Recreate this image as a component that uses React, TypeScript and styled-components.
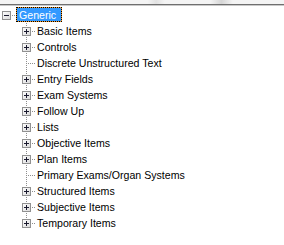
import React, { FC } from 'react';
import styled, { createGlobalStyle } from 'styled-components';

const Global = createGlobalStyle`
	html, body {
		margin: 0;
		padding: 0;
		background: #ffffff;
	}
	body {
		font-family: "Liberation Sans", Arial, sans-serif;
		font-size: 10.6px;
		color: #000000;
	}
`;

const Wrapper = styled.div`
	width: 284px;
	height: 245px;
	display: flex;
	flex-direction: column;
	overflow: hidden;
	background: #ffffff;
`;

const TopBar = styled.div`
	flex: 0 0 4px;
	background: linear-gradient(
		to right,
		#f4f4f4 0%,
		#f4f4f4 52%,
		#e2e2e2 55%,
		#f4f4f4 58%,
		#f4f4f4 74%,
		#d6d6d6 78%,
		#f4f4f4 82%,
		#f4f4f4 100%
	);
	border-bottom: 1px solid #6f6f6f;
	box-shadow: 0 1px 0 #c9c9c9;
`;

const Tree = styled.div`
	display: flex;
	flex-direction: column;
	padding-top: 2px;
`;

const Row = styled.div<{ $indent: number }>`
	display: flex;
	align-items: stretch;
	height: 16px;
	padding-left: ${(p) => p.$indent}px;
`;

const Connector = styled.div<{ $width: number; $line: number; $vert: 'none' | 'full' | 'top' | 'bottom' }>`
	position: relative;
	flex: 0 0 ${(p) => p.$width}px;
	display: flex;
	align-items: center;

	&::before {
		content: '';
		display: ${(p) => (p.$vert === 'none' ? 'none' : 'block')};
		position: absolute;
		left: ${(p) => p.$line}px;
		width: 1px;
		top: ${(p) => (p.$vert === 'bottom' ? '8px' : '0')};
		bottom: ${(p) => (p.$vert === 'top' ? '8px' : '0')};
		background-image: linear-gradient(to bottom, #8e8e8e 50%, transparent 50%);
		background-size: 1px 2px;
	}

	&::after {
		content: '';
		position: absolute;
		left: ${(p) => p.$line + 1}px;
		right: 0;
		top: 8px;
		height: 1px;
		background-image: linear-gradient(to right, #8e8e8e 50%, transparent 50%);
		background-size: 2px 1px;
		background-position: 1px 0;
	}
`;

const Expander = styled.svg<{ $left: number }>`
	position: absolute;
	left: ${(p) => p.$left}px;
	top: 4px;
	width: 9px;
	height: 9px;
	z-index: 1;
`;

const Label = styled.span<{ $selected?: boolean }>`
	display: flex;
	align-items: center;
	white-space: nowrap;
	line-height: 14px;
	padding: ${(p) => (p.$selected ? '0 5px 0 2px' : '0 1px')};
	height: ${(p) => (p.$selected ? '13px' : '16px')};
	border: ${(p) => (p.$selected ? '1px dotted #000000' : 'none')};
	background: ${(p) =>
		p.$selected ? 'linear-gradient(#3399ff, #3399ff) padding-box, #f39a2b border-box' : 'transparent'};
	color: ${(p) => (p.$selected ? '#ffffff' : '#000000')};
`;

const Box: FC<{ left: number; open?: boolean }> = ({ left, open }) => (
	<Expander $left={left} viewBox="0 0 9 9">
		<defs>
			<linearGradient id="bx" x1="0" y1="0" x2="1" y2="1">
				<stop offset="0" stopColor="#ffffff" />
				<stop offset="1" stopColor="#d8d8d8" />
			</linearGradient>
		</defs>
		<rect x="0.5" y="0.5" width="8" height="8" fill="url(#bx)" stroke="#919191" />
		<rect x="2" y="4" width="5" height="1" fill="#1a1a2e" />
		{!open && <rect x="4" y="2" width="1" height="5" fill="#1a1a2e" />}
	</Expander>
);

const items: { name: string; leaf?: boolean }[] = [
	{ name: 'Basic Items' },
	{ name: 'Controls' },
	{ name: 'Discrete Unstructured Text', leaf: true },
	{ name: 'Entry Fields' },
	{ name: 'Exam Systems' },
	{ name: 'Follow Up' },
	{ name: 'Lists' },
	{ name: 'Objective Items' },
	{ name: 'Plan Items' },
	{ name: 'Primary Exams/Organ Systems', leaf: true },
	{ name: 'Structured Items' },
	{ name: 'Subjective Items' },
	{ name: 'Temporary Items' },
];

const App: FC = () => (
	<Wrapper>
		<Global />
		<TopBar />
		<Tree>
			<Row $indent={0}>
				<Connector $width={16} $line={6} $vert="none">
					<Box left={2} open />
				</Connector>
				<Label $selected>Generic</Label>
			</Row>
			{items.map((it, i) => (
				<Row key={it.name} $indent={17}>
					<Connector $width={19} $line={9} $vert={i === items.length - 1 ? 'top' : 'full'}>
						{!it.leaf && <Box left={5} />}
					</Connector>
					<Label>{it.name}</Label>
				</Row>
			))}
		</Tree>
	</Wrapper>
);

export default App;
